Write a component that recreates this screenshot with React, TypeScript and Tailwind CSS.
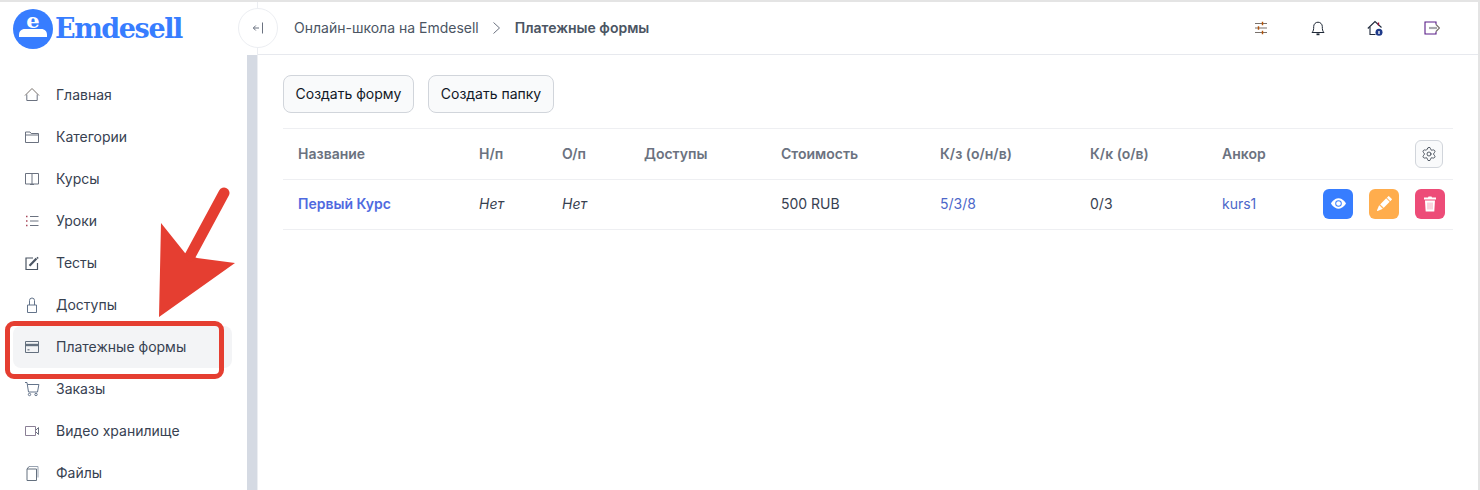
import React from "react";
import { Settings } from "lucide-react";
import { BsEyeFill, BsPencilFill } from "react-icons/bs";

const Ico = ({ children, w = 16, h = 16, className = "" }: { children: React.ReactNode; w?: number; h?: number; className?: string }) => (
  <svg width={w} height={h} viewBox={`0 0 ${w} ${h}`} fill="none" stroke="currentColor" strokeWidth="1" className={`shrink-0 ${className}`}>
    {children}
  </svg>
);

const HomeI = () => (
  <Ico className="text-[#78716c]"><path d="M1 8.5 8 1.5l7 7" /><path d="M2.8 7.5v6h10.4v-6" stroke="#6b7280" /></Ico>
);
const FolderI = () => (
  <Ico className="text-[#6b7280]"><path d="M1.5 13.5v-10.5h4.5l1.2 1.5h7.3v9z" /><path d="M1.5 6h13" /></Ico>
);
const BookI = () => (
  <Ico className="text-[#6b7280]"><path d="M1.5 2.5h13v10.5h-13z" /><path d="M8 2.5v11" /><path d="M6 13.5h4" /></Ico>
);
const ListI = () => (
  <Ico className="text-[#6b7280]">
    <path d="M6 3.5h8.5M6 8h8.5M6 12.5h8.5" />
    <path d="M2 3.5h1.5M2 8h1.5M2 12.5h1.5" stroke="#a8485a" strokeWidth="1.4" />
  </Ico>
);
const PenI = () => (
  <Ico className="text-[#4b5563]">
    <path d="M13.5 8v6.5h-11.5v-11.5h7" strokeWidth="1.2" />
    <path d="M5.5 10.8 12.5 3.5" strokeWidth="2.2" />
    <path d="M13 2.2l1.2 1.2" strokeWidth="1.4" />
  </Ico>
);
const LockI = () => (
  <Ico className="text-[#64748b]">
    <path d="M3.5 8h9v7.5h-9z" />
    <path d="M5.5 8V3.5a2.5 2.5 0 0 1 5 0V8" />
  </Ico>
);
const CardI = () => (
  <Ico className="text-[#64707f]">
    <path d="M1.5 2.5h13v11h-13z" />
    <path d="M1.5 6h13" strokeWidth="2.4" />
    <path d="M3.5 10.8h2" strokeWidth="1.2" />
  </Ico>
);
const CartI = () => (
  <Ico className="text-[#64748b]">
    <path d="M1 1.5h2l1.5 9.5h9l1.4-7.5H3.4" />
    <circle cx="5.5" cy="13.5" r="1.2" />
    <circle cx="12" cy="13.5" r="1.2" />
  </Ico>
);
const VideoI = () => (
  <Ico className="text-[#6b7280]">
    <path d="M1.5 3.5h10v9h-10z" stroke="#8a7f95" />
    <path d="M12 7l2.5-2.5v7L12 9" />
  </Ico>
);
const FilesI = () => (
  <Ico className="text-[#64707f]">
    <path d="M3 4h9.5v11.5H3z" />
    <path d="M5 1.5h9v11" stroke="#9aa4b2" />
    <path d="M3 4 5 1.5" />
  </Ico>
);

const items = [
  { label: "Главная", Icon: HomeI },
  { label: "Категории", Icon: FolderI },
  { label: "Курсы", Icon: BookI },
  { label: "Уроки", Icon: ListI },
  { label: "Тесты", Icon: PenI },
  { label: "Доступы", Icon: LockI },
  { label: "Платежные формы", Icon: CardI, active: true },
  { label: "Заказы", Icon: CartI },
  { label: "Видео хранилище", Icon: VideoI },
  { label: "Файлы", Icon: FilesI },
];

const heads = [
  ["Название", "w-[181px]"],
  ["Н/п", "w-[83px]"],
  ["О/п", "w-[82px]"],
  ["Доступы", "w-[137px]"],
  ["Стоимость", "w-[159px]"],
  ["К/з (о/н/в)", "w-[150px]"],
  ["К/к (о/в)", "w-[132px]"],
  ["Анкор", "w-[101px]"],
];

export default function App() {
  return (
    <div className="relative flex h-[490px] w-[1480px] overflow-hidden border-t-2 border-r-2 border-[#e4e4e4] bg-white font-['Inter',sans-serif] text-sm text-[#374151]">
      <aside className="flex w-[257px] shrink-0 flex-col">
        <div className="flex h-[53px] items-start pl-[13px] pt-[7px]">
          <div className="relative h-[40px] w-[40px] shrink-0 overflow-hidden rounded-full bg-[#377dff]">
            <span className="absolute left-0 right-0 top-[-1px] text-center font-['DejaVu_Serif',serif] text-[21px] leading-[25px] font-bold text-white">e</span>
            <svg width="40" height="40" viewBox="0 0 40 40" className="absolute left-0 top-0">
              <path d="M6 28v-2c0-3.500 2-6 6-6h16c4 0 6 2.500 6 6v2z" fill="#fff" />
            </svg>
          </div>
          <span className="ml-[2px] mt-[2px] font-['DejaVu_Serif',serif] text-[27px] leading-[36px] font-bold tracking-[-1.4px] text-[#377dff]">Emdesell</span>
        </div>
        <div className="flex min-h-0 flex-1">
          <nav className="flex w-[247px] flex-col pl-[13px] pr-[15px] pt-[19px]">
            {items.map(({ label, Icon, active }) => (
              <div key={label} className={`flex h-[42px] shrink-0 items-center gap-[16px] rounded-lg pl-[11px] ${active ? "bg-[#f3f4f6]" : ""}`}>
                <Icon />
                <span className="text-[14px] text-[#374151]">{label}</span>
              </div>
            ))}
          </nav>
          <div className="w-[10px] bg-[#d5dae3]" />
        </div>
      </aside>

      <main className="flex min-w-0 flex-1 flex-col border-l border-[#eceef2]">
        <header className="flex h-[53px] shrink-0 items-center border-b border-[#e7e9ee] pl-[36px] pr-[38px] text-[#4b5563]">
          <span>Онлайн-школа на Emdesell</span>
          <Ico w={12} h={14} className="mx-[12px] text-[#6b7280]">
            <path d="M2.500 1.500 8.500 7l-6 5.500" />
          </Ico>
          <span className="font-semibold">Платежные формы</span>
          <div className="ml-auto flex items-center gap-[41px]">
            <Ico className="text-[#78716c]">
              <path d="M2 3.500h12M2 8h12M2 12.500h12" strokeWidth="1.200" />
              <path d="M9.500 1.800v3.400M5.500 6.300v3.400M9.500 10.800v3.400" stroke="#b45309" strokeWidth="1.400" />
            </Ico>
            <Ico className="text-[#1f2937]">
              <path d="M2 12.500c1.500-1.500 1.700-3 1.700-6a4.300 4.300 0 0 1 8.600 0c0 3 .2 4.500 1.700 6z" />
              <path d="M6.500 14.300h3" strokeWidth="1.800" />
            </Ico>
            <Ico className="text-[#1e293b]">
              <path d="M.8 8.500 8 1.500l6.500 6" strokeWidth="1.100" />
              <path d="M3 7v7.500h5.500" strokeWidth="1.100" />
              <path d="M11.500 2.500v3" stroke="#9f1239" strokeWidth="1.300" />
              <circle cx="12" cy="12.200" r="3.500" fill="#1e3a8a" stroke="none" />
              <path d="M12 11v3" stroke="#fff" strokeWidth="1.300" />
            </Ico>
            <Ico className="text-[#581c87]">
              <path d="M12 4.500v-2.500H1v12h11v-2.500" strokeWidth="1.100" />
              <path d="M5 8H13" stroke="#a8a8ad" strokeWidth="2.200" />
              <path d="M12 4.500 15.500 8 12 11.500" stroke="#78716c" strokeWidth="1.200" />
            </Ico>
          </div>
        </header>

        <div className="px-[25px] pt-[20px]">
          <div className="flex gap-[14px]">
            <button className="h-[38px] w-[131px] rounded-lg border border-[#d1d5db] bg-[#f9fafb] text-[14px] text-[#111827]">Создать форму</button>
            <button className="h-[38px] w-[126px] rounded-lg border border-[#d1d5db] bg-[#f9fafb] text-[14px] text-[#111827]">Создать папку</button>
          </div>

          <table className="mt-[15px] w-[1170px] table-fixed border-t border-[#eeeff2] text-left">
            <thead>
              <tr className="h-[51px] border-b border-[#eeeff2]">
                {heads.map(([h, w]) => (
                  <th key={h} className={`${w} pl-[15px] text-[14px] font-semibold text-[#6b7280]`}>{h}</th>
                ))}
                <th className="pr-[10px] text-right">
                  <span className="inline-flex h-[28px] w-[28px] items-center justify-center rounded-md border border-[#d1d5db] bg-[#f9fafb] align-middle">
                    <Settings size={16} strokeWidth={1.1} className="text-[#1f2937]" />
                  </span>
                </th>
              </tr>
            </thead>
            <tbody>
              <tr className="h-[50px] border-b border-[#eeeff2] text-[14px]">
                <td className="pb-[2px] pl-[15px] font-semibold text-[#4f6ae0]">Первый Курс</td>
                <td className="pb-[2px] pl-[15px] italic text-[#374151]">Нет</td>
                <td className="pb-[2px] pl-[15px] italic text-[#374151]">Нет</td>
                <td className="pb-[2px] pl-[15px]"></td>
                <td className="pb-[2px] pl-[15px] text-[#374151]">500 RUB</td>
                <td className="pb-[2px] pl-[15px] text-[#4c67c9]">5/3/8</td>
                <td className="pb-[2px] pl-[15px] text-[#374151]">0/3</td>
                <td className="pb-[2px] pl-[15px] text-[#4c67c9]">kurs1</td>
                <td className="pb-[2px] pr-[8px]">
                  <div className="flex justify-end gap-[16px]">
                    <span className="flex h-[30px] w-[30px] items-center justify-center rounded-md bg-[#377dff] text-white"><BsEyeFill size={15} /></span>
                    <span className="flex h-[30px] w-[30px] items-center justify-center rounded-md bg-[#ffad4d] text-white"><BsPencilFill size={15} /></span>
                    <span className="flex h-[30px] w-[30px] items-center justify-center rounded-md bg-[#ed4c78] text-white">
                      <svg width="14" height="16" viewBox="0 0 14 16">
                        <path d="M1 1.500h4l.5-1h3l.5 1h4v2H1z" fill="#fff" />
                        <path d="M2 4.500h10l-.7 11H2.700z" fill="#fff" />
                        <path d="M5 6.500v7M7 6.500v7M9 6.500v7" stroke="#f4a6bc" strokeWidth="1" />
                      </svg>
                    </span>
                  </div>
                </td>
              </tr>
            </tbody>
          </table>
        </div>
      </main>

      <button className="absolute left-[238px] top-[6px] flex h-[40px] w-[40px] items-center justify-center rounded-full border border-[#eceef2] bg-white text-[#6b7280]">
        <Ico w={12} h={12}>
          <path d="M10.500 0.500v11" />
          <path d="M7 6H1.500M3.800 3.500 1.300 6l2.500 2.500" />
        </Ico>
      </button>

      <div className="pointer-events-none absolute left-[5px] top-[319px] h-[58px] w-[219px] rounded-[9px] border-[5px] border-[#e53e31]" />
      <svg className="pointer-events-none absolute left-0 top-[-2px]" width="260" height="330" viewBox="0 0 260 330">
        <path d="M159 317 L161 223 L185 253 L197 258 L235 263 Z" fill="#e53e31" />
        <path d="M190 256 L224 193" stroke="#e53e31" strokeWidth="11" strokeLinecap="round" />
      </svg>
    </div>
  );
}
